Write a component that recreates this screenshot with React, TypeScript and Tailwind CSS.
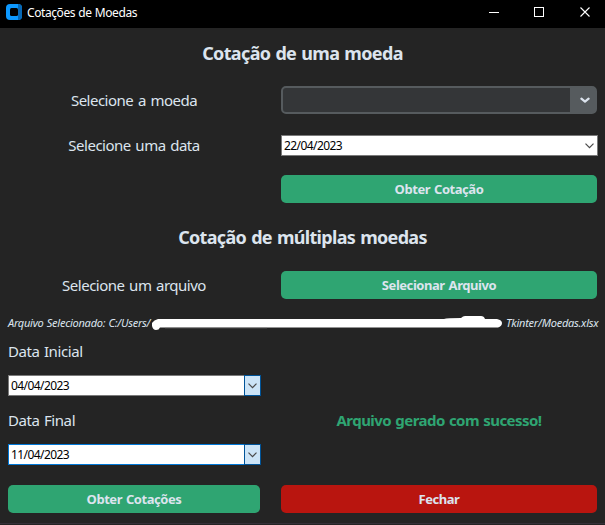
import type { ReactNode } from "react";

function Chevron({ thick = false }: { thick?: boolean }) {
  return thick ? (
    <svg width="10" height="6" viewBox="0 0 10 6" fill="none" stroke="#dce4ee" strokeWidth="2.2" strokeLinecap="round" strokeLinejoin="round">
      <path d="M1.4 1.6 5 4.6 8.6 1.6" />
    </svg>
  ) : (
    <svg className="mt-px" width="9" height="6" viewBox="0 0 9 6" fill="none" stroke="#4a4a4a" strokeWidth="1.2">
      <path d="M.5 .7 4.5 4.7 8.5 .7" />
    </svg>
  );
}

function Button({ children, danger = false }: { children: ReactNode; danger?: boolean }) {
  return (
    <button
      className={`flex h-7 w-full items-center justify-center rounded-[5px] text-[13px] font-bold tracking-[-0.45px] whitespace-nowrap text-[#dce4ee] [word-spacing:1px] ${danger ? "bg-[#b9150f]" : "bg-[#2fa572]"}`}
    >
      <span className="mt-px">{children}</span>
    </button>
  );
}

function DateField({ value, focused = false, highlighted = false }: { value: string; focused?: boolean; highlighted?: boolean }) {
  return (
    <div className={`flex h-[21px] w-full border bg-white ${focused ? "border-[#0078d7]" : "border-[#7a7a7a]"}`}>
      <span className="flex-1 pl-[2px] text-[12px] leading-[19px] tracking-[-0.58px] text-black">{value}</span>
      <span className={`-my-px -mr-px flex w-[17px] items-center justify-center border ${highlighted ? "border-[#005499] bg-[#cce4f7]" : "border-transparent"}`}>
        <Chevron />
      </span>
    </div>
  );
}

function TitleBar() {
  return (
    <header className="flex h-7 shrink-0 items-center bg-black pl-1.5 text-white">
      <svg className="-mt-1" width="16" height="16" viewBox="0 0 16 16">
        <rect width="16" height="16" rx="4" fill="#0d99ff" />
        <path d="M12 0a4 4 0 0 1 4 4v8a4 4 0 0 1-4 4z" fill="#0768b5" />
        <rect x="4" y="4" width="8" height="8" rx="1.5" fill="#000" />
      </svg>
      <span className="-mt-[2px] ml-[5px] flex-1 text-[12px] tracking-[-0.42px] [word-spacing:0.5px]">Cotações de Moedas</span>
      <svg className="-mt-1" width="116" height="12" viewBox="0 0 116 12" fill="none" stroke="#fff">
        <path d="M0 6.5h10" />
        <rect x="45.5" y="1.5" width="9" height="9" />
        <path d="m91.5 1.5 9 9m0-9-9 9" strokeWidth="1.1" />
      </svg>
    </header>
  );
}

export default function App() {
  return (
    <div className="flex h-[525px] w-[605px] flex-col overflow-hidden bg-[#242424] font-['Noto_Sans','Open_Sans',sans-serif] text-[#dce4ee]">
      <TitleBar />
      <main className="flex flex-1 flex-col pr-2 pl-2">
        <h1 className="flex h-[50px] shrink-0 items-center justify-center text-[18px] font-bold tracking-[-0.65px] whitespace-nowrap [word-spacing:1px]"><span>Cotação de uma moeda</span></h1>
        <div className="mt-2 grid h-7 shrink-0 grid-cols-[252px_316px] items-center gap-x-[21px]">
          <span className="text-center text-[15px] tracking-[-0.5px] [word-spacing:1.2px]">Selecione a moeda</span>
          <div className="flex h-7 rounded-[5px] border-2 border-[#565b5e] bg-[#343638]">
            <span className="flex-1" />
            <span className="flex w-[25px] items-center justify-center bg-[#565b5e] pl-1"><Chevron thick /></span>
          </div>
        </div>
        <div className="mt-5 grid h-[21px] shrink-0 grid-cols-[252px_317px] items-center gap-x-[21px]">
          <span className="text-center text-[15px] tracking-[-0.5px] [word-spacing:1.2px]">Selecione uma data</span>
          <DateField value="22/04/2023" />
        </div>
        <div className="mt-5 ml-[273px] w-[316px]"><Button>Obter Cotação</Button></div>
        <h2 className="flex h-[68px] shrink-0 items-center justify-center text-[18px] font-bold tracking-[-0.68px] whitespace-nowrap [word-spacing:1px]"><span>Cotação de múltiplas moedas</span></h2>
        <div className="grid h-7 shrink-0 grid-cols-[252px_316px] items-center gap-x-[21px]">
          <span className="text-center text-[15px] tracking-[-0.5px] [word-spacing:1.2px]">Selecione um arquivo</span>
          <Button>Selecionar Arquivo</Button>
        </div>
        <div className="-mr-2 flex h-12 shrink-0 items-center text-[11px] tracking-[-0.24px] whitespace-nowrap italic [word-spacing:0.6px]">
          <span className="w-[143px]">Arquivo Selecionado: C:/Users/</span>
          <svg className="shrink-0" width="355" height="16" viewBox="151 315 355 16">
            <path d="M152 323q2-3 6-4h286q3-1 17-1 2-2 4-2h16q3 0 4 3h12q5 1 5 4t-4 4.5H160q-1 2.5-4 2.5-3 0-4-4z" fill="#fff" />
            <path d="M165 327.8h102" stroke="#888" strokeWidth=".7" />
          </svg>
          <span>Tkinter/Moedas.xlsx</span>
        </div>
        <div className="flex gap-[21px]">
          <section className="flex w-[252px] flex-col">
            <label className="mt-[-7px] flex h-[23px] items-center text-[15px] tracking-[-0.4px] [word-spacing:0.8px]"><span>Data Inicial</span></label>
            <div className="mt-3 w-[253px]"><DateField value="04/04/2023" highlighted /></div>
            <label className="mt-[13px] flex h-[23px] items-center text-[15px] tracking-[-0.4px] [word-spacing:0.8px]"><span>Data Final</span></label>
            <div className="mt-3 w-[253px]"><DateField value="11/04/2023" focused highlighted /></div>
            <div className="mt-5"><Button>Obter Cotações</Button></div>
          </section>
          <section className="flex w-[316px] flex-col justify-end">
            <p className="mb-[53px] flex h-[23px] items-center justify-center text-[15px] font-bold tracking-[-0.54px] whitespace-nowrap text-[#2fa572] [word-spacing:0.8px]"><span>Arquivo gerado com sucesso!</span></p>
            <Button danger>Fechar</Button>
          </section>
        </div>
      </main>
      <footer className="mb-px h-px shrink-0 bg-[#353039]" />
    </div>
  );
}
